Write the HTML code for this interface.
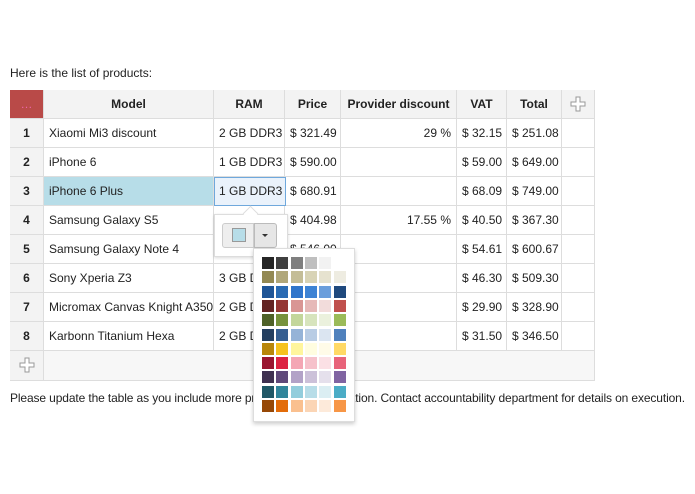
<!DOCTYPE html>
<html><head><style>
body{margin:0;width:695px;height:494px;background:#fff;font-family:"Liberation Sans",Arial,sans-serif;font-size:12px;color:#222;position:relative;overflow:hidden}
.a{position:absolute}
.c{position:absolute;box-sizing:border-box;border-right:1px solid #ddd;border-bottom:1px solid #ddd;line-height:29px;padding:0 5px;white-space:nowrap;overflow:hidden}
.h{background:#f3f3f3;font-weight:bold;text-align:center}
.n{background:#f3f3f3;font-weight:bold;text-align:center}
.r{text-align:right}
.sw{position:absolute;width:12px;height:12px}
</style></head><body>
<div class="a" style="left:10px;top:66px">Here is the list of products:</div>
<div class="a" style="left:10px;top:90px;width:585px;height:291px;border-left:1px solid #ddd;border-top:1px solid #ddd;box-sizing:border-box"></div>
<div id="t"></div>
<div class="a" style="left:10px;top:391px;white-space:nowrap;letter-spacing:-0.12px">Please update the table as you include more products and information. Contact accountability department for details on execution.</div>
<div class="a" style="left:214px;top:214px;width:74px;height:43px;background:#fff;border:1px solid #ddd;box-shadow:0 1px 3px rgba(0,0,0,.15);box-sizing:border-box"></div>
<div class="a" style="left:245px;top:208px;width:10px;height:10px;background:#fff;border-left:1px solid #ddd;border-top:1px solid #ddd;transform:rotate(45deg)"></div>
<div class="a" style="left:222px;top:223px;width:32px;height:25px;background:#eee;border:1px solid #ccc;box-sizing:border-box;border-radius:3px 0 0 3px"></div>
<div class="a" style="left:232px;top:228px;width:14px;height:14px;background:#b7dde8;border:1px solid #999;box-sizing:border-box"></div>
<div class="a" style="left:254px;top:223px;width:23px;height:25px;background:#e6e6e6;border:1px solid #bbb;box-sizing:border-box;border-radius:0 3px 3px 0"></div>
<div class="a" style="left:262px;top:234px;border-left:3px solid transparent;border-right:3px solid transparent;border-top:3px solid #333"></div>
<div class="a" style="left:253px;top:248px;width:102px;height:174px;background:#fff;border:1px solid #ddd;box-shadow:0 2px 4px rgba(0,0,0,.2);box-sizing:border-box"></div>
<div id="p"></div>
<script>
var cols=[10,44,214,285,341,457,507,562,595];
var rows=[["…","Model","RAM","Price","Provider discount","VAT","Total",""],
["1","Xiaomi Mi3 discount","2 GB DDR3","$ 321.49","29 %","$ 32.15","$ 251.08",""],
["2","iPhone 6","1 GB DDR3","$ 590.00","","$ 59.00","$ 649.00",""],
["3","iPhone 6 Plus","1 GB DDR3","$ 680.91","","$ 68.09","$ 749.00",""],
["4","Samsung Galaxy S5","","$ 404.98","17.55 %","$ 40.50","$ 367.30",""],
["5","Samsung Galaxy Note 4","","$ 546.00","","$ 54.61","$ 600.67",""],
["6","Sony Xperia Z3","3 GB DDR3","","","$ 46.30","$ 509.30",""],
["7","Micromax Canvas Knight A350","2 GB DDR3","","","$ 29.90","$ 328.90",""],
["8","Karbonn Titanium Hexa","2 GB DDR3","","","$ 31.50","$ 346.50",""]];
var h="";
var plus='<svg width="16" height="16" viewBox="0 0 16 16" style="position:absolute;left:8px;top:6px"><path d="M6 1h4v5h5v4h-5v5H6v-5H1V6h5z" fill="#fff" stroke="#999"/></svg>';
for(var i=0;i<rows.length;i++){var y=i==0?90:119+(i-1)*29;
for(var j=0;j<8;j++){var cl="c",st="";
if(i==0)cl+=" h";else if(j==0)cl+=" n";
if(j>=3&&i>0)cl+=" r";
if(i==0&&j==0)st+="background:#b94a48;color:#e6a;font-weight:normal;";
if(i==3&&j==1)st+="background:#b7dde8;";
var txt=rows[i][j];
if(i==0&&j==7)txt=plus;
h+='<div class="'+cl+'" style="left:'+cols[j]+'px;top:'+(i==0?90:y)+'px;width:'+(cols[j+1]-cols[j])+'px;height:29px;'+st+'">'+txt+'</div>';}}
h+='<div class="c n" style="left:10px;top:351px;width:34px;height:30px">'+plus.replace('left:8px','left:9px')+'</div>';
h+='<div class="c" style="left:44px;top:351px;width:551px;height:30px;background:#f7f7f7"></div>';
h+='<div class="a" style="left:214px;top:177px;width:72px;height:29px;border:1px solid #6fa8dc;background:#eaf2fb;box-sizing:border-box;line-height:27px;padding-left:4px">1 GB DDR3</div>';
document.getElementById("t").innerHTML=h;
var P=[["#262626","#404040","#7f7f7f","#bfbfbf","#f2f2f2","#fff"],
["#938953","#b0a77a","#c4bd97","#d8d3b5","#e6e2cf","#eeece1"],
["#1f5597","#2a6bb3","#2f75cb","#3d83d4","#6a9edc","#1f497d"],
["#632423","#953734","#d99694","#e6b9b8","#f2dcdb","#c0504d"],
["#4f6228","#76923c","#c3d69b","#d7e4bd","#ebf1dd","#9bbb59"],
["#243f60","#365f91","#95b3d7","#b8cce4","#dbe5f1","#4f81bd"],
["#b8860b","#f5c21f","#fff59d","#fffde0","#fffbe8","#ffd966"],
["#9a1530","#dc2342","#f4a6b4","#f6c1cb","#fbe0e5","#e8637a"],
["#3f3151","#5f497a","#b2a2c7","#ccc1d9","#e5e0ec","#8064a2"],
["#205867","#31859b","#92cddc","#b7dde8","#dbeef3","#4bacc6"],
["#974806","#e36c09","#fac08f","#fbd5b5","#fdeada","#f79646"]];
var s="";
for(var r=0;r<11;r++)for(var c=0;c<6;c++)s+='<div class="sw" style="left:'+(262+c*14.3)+'px;top:'+(257+r*14.3)+'px;background:'+P[r][c]+'"></div>';
document.getElementById("p").innerHTML=s;
</script>
</body></html>
